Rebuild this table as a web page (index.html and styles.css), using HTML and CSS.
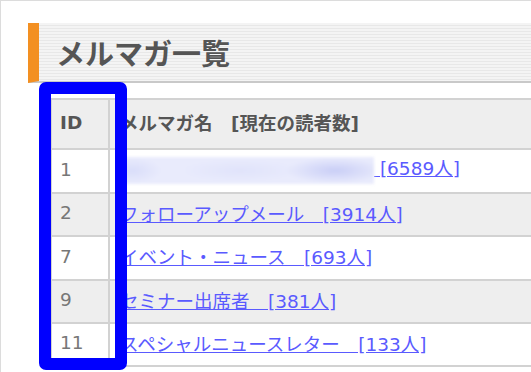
FILE: index.html
```html
<!DOCTYPE html>
<html>
<head>
<meta http-equiv="Content-Type" content="text/html; charset=utf-8"/>
<title>メルマガ一覧</title>
<link rel="stylesheet" href="styles.css">
</head>
<body>
<div class="page">
<h1 class="title">メルマガ一覧</h1>

<table class="list">
<thead>
<tr><th class="col-id">ID</th><th>メルマガ名　[現在の読者数]</th></tr>
</thead>
<tbody>
<tr><td class="col-id">1</td><td><a href="#"><span class="masked"></span> [6589人]</a></td></tr>
<tr><td class="col-id">2</td><td><a href="#">フォローアップメール　[3914人]</a></td></tr>
<tr><td class="col-id">7</td><td><a href="#">イベント・ニュース　[693人]</a></td></tr>
<tr><td class="col-id">9</td><td><a href="#">セミナー出席者　[381人]</a></td></tr>
<tr><td class="col-id">11</td><td><a href="#">スペシャルニュースレター　[133人]</a></td></tr>
</tbody>
</table>

<div class="marker"></div>
</div>
</body>
</html>
```

FILE: styles.css
```css
html, body {
   margin: 0;
   height: 100%;
}

body {
   font-family: "DejaVu Sans", "Noto Sans CJK JP", sans-serif;
   background-color: white;
   border-top: 1px solid #dcdcdc;
   border-left: 1px solid #dcdcdc;
   box-sizing: border-box;
   overflow: hidden;
}

.page {
   position: relative;
   padding: 22px 0 0 27px;
}

.title {
   display: flex;
   align-items: center;
   height: 58px;
   margin: 0;
   padding-left: 17px;
   width: 560px;
   border-left: 11px solid #f39022;
   border-bottom: 2px solid #c9c9c9;
   background: repeating-linear-gradient(#f4f4f4 0 2px, #e8e8e8 2px 3px);
   font-family: "Noto Sans CJK JP", sans-serif;
   font-size: 29px;
   font-weight: bold;
   color: #555;
}

.list {
   margin: 15px 0 0 22px;
   width: 560px;
   border-collapse: collapse;
   font-size: 18.5px;
}

.list th, .list td {
   border: 2px solid #d2d2d2;
   text-align: left;
   padding: 0 0 4px 10px;
   white-space: nowrap;
}

.list th {
   height: 44px;
   background-color: #eee;
   color: #555;
   font-weight: bold;
}

/* row pitch is height + one rule */
.list tbody tr {
   height: 43px;
}

.list tbody tr:nth-child(1), .list tbody tr:nth-child(3) {
   height: 44px;
}

.list tbody tr:nth-child(even) {
   background-color: #eee;
}

.list .col-id {
   width: 48px;
   padding-left: 8px;
   color: #777;
}

.list th.col-id {
   color: #555;
}

.list a {
   color: #5a5aff;
}

/* blurred name in first row */
.masked {
   display: inline-block;
   width: 254px;
   height: 27px;
   vertical-align: middle;
   background:
      radial-gradient(ellipse 50px 13px at 215px 50%, #c9cef6, transparent),
      radial-gradient(ellipse 30px 13px at 12px 50%, #d9ddf9, transparent),
      radial-gradient(ellipse 60px 12px at 120px 50%, #e0e3fa, transparent),
      #e9ebfc;
   filter: blur(1.5px);
}

.marker {
   position: absolute;
   left: 38px;
   top: 81px;
   width: 64px;
   height: 264px;
   border: 12px solid #0000ff;
   border-radius: 7px;
}
```
